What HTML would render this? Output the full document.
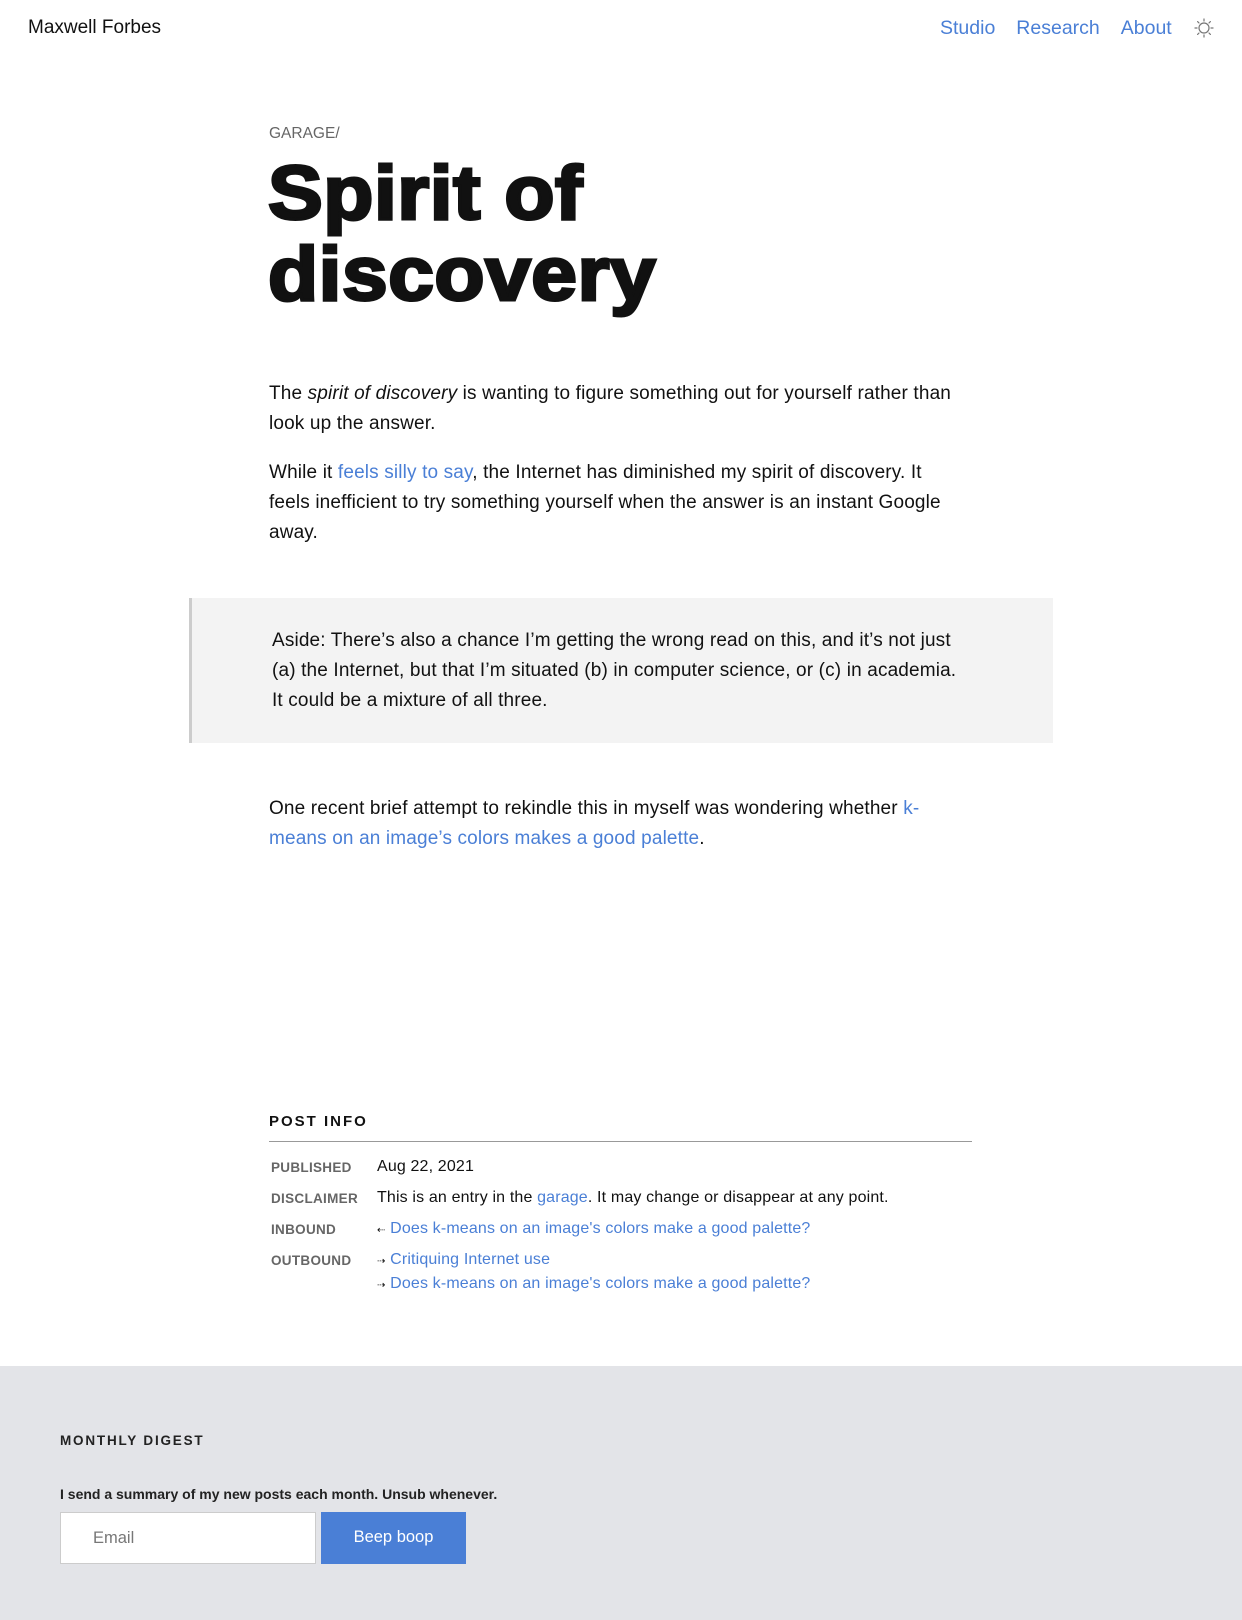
<!DOCTYPE html>
<html><head><meta charset="utf-8"><style>
*{margin:0;padding:0;box-sizing:border-box}
body{width:1242px;height:1620px;background:#fff;font-family:"Liberation Sans",sans-serif;color:#111;position:relative;overflow:hidden}
a{color:#4a7fd6;text-decoration:none}
.abs{position:absolute;white-space:nowrap}
.p{position:absolute;left:269px;width:705px;font-size:19px;line-height:30px;letter-spacing:0.15px}
.lbl{position:absolute;left:271px;font-size:13.5px;font-weight:bold;color:#666;letter-spacing:.3px}
.val{position:absolute;left:377px;font-size:16px;letter-spacing:0.15px}
</style></head><body>
<div class="abs" style="left:28px;top:17px;font-size:19px">Maxwell Forbes</div>
<div class="abs" style="left:940px;top:17px;font-size:19.5px"><a>Studio</a><a style="margin-left:21px">Research</a><a style="margin-left:21px">About</a></div>
<svg class="abs" style="left:1194px;top:18px" width="20" height="20" viewBox="0 0 20 20" fill="none" stroke="#777" stroke-width="1.2"><circle cx="10" cy="10" r="5"/><g stroke-linecap="round"><path d="M10 1v2M10 17v2M1 10h2M17 10h2M3.6 3.6l1.4 1.4M15 15l1.4 1.4M3.6 16.4L5 15M15 5l1.4-1.4"/></g></svg>
<div class="abs" style="left:269px;top:125px;font-size:15.5px;color:#666">GARAGE/</div>
<div class="abs" style="left:268px;top:153px;font-size:76px;font-weight:900;line-height:81px;letter-spacing:0.5px;color:#111;-webkit-text-stroke:3px #111;transform:scaleX(1.08);transform-origin:0 0">Spirit of<br>discovery</div>
<div class="p" style="top:379px">The <i>spirit of discovery</i> is wanting to figure something out for yourself rather than look up the answer.</div>
<div class="p" style="top:458px;width:690px">While it <a>feels silly to say</a>, the Internet has diminished my spirit of discovery. It feels inefficient to try something yourself when the answer is an instant Google away.</div>
<div class="abs" style="left:189px;top:598px;width:864px;height:145px;background:#f3f3f3;border-left:3px solid #ccc"></div>
<div class="p" style="left:272px;top:626px;width:695px">Aside: There’s also a chance I’m getting the wrong read on this, and it’s not just (a) the Internet, but that I’m situated (b) in computer science, or (c) in academia. It could be a mixture of all three.</div>
<div class="p" style="top:794px;width:680px">One recent brief attempt to rekindle this in myself was wondering whether <a>k-means on an image’s colors makes a good palette</a>.</div>
<div class="abs" style="left:269px;top:1113px;font-size:15px;font-weight:bold;letter-spacing:2px">POST INFO</div>
<div class="abs" style="left:269px;top:1141px;width:703px;border-top:1.5px solid #999"></div>
<div class="lbl" style="top:1160px">PUBLISHED</div><div class="val" style="top:1158px">Aug 22, 2021</div>
<div class="lbl" style="top:1191px">DISCLAIMER</div><div class="val" style="top:1189px">This is an entry in the <a>garage</a>. It may change or disappear at any point.</div>
<div class="lbl" style="top:1222px">INBOUND</div><div class="val" style="top:1220px"><span style="font-size:10px">⇠</span> <a>Does k-means on an image's colors make a good palette?</a></div>
<div class="lbl" style="top:1253px">OUTBOUND</div><div class="val" style="top:1251px"><span style="font-size:10px">⇢</span> <a>Critiquing Internet use</a></div>
<div class="val" style="top:1275px"><span style="font-size:10px">⇢</span> <a>Does k-means on an image's colors make a good palette?</a></div>
<div class="abs" style="left:0;top:1366px;width:1242px;height:254px;background:#e3e4e8"></div>
<div class="abs" style="left:60px;top:1433px;font-size:13.5px;font-weight:bold;letter-spacing:1.8px;color:#222">MONTHLY DIGEST</div>
<div class="abs" style="left:60px;top:1486px;font-size:14px;font-weight:bold;color:#222">I send a summary of my new posts each month. Unsub whenever.</div>
<div class="abs" style="left:60px;top:1512px;width:256px;height:52px;background:#fff;border:1px solid #ccc;font-size:16.5px;color:#777;padding:16px 0 0 32px">Email</div>
<div class="abs" style="left:321px;top:1512px;width:145px;height:52px;background:#4a7fd6;color:#fff;font-size:16.5px;text-align:center;padding-top:16px">Beep boop</div>
</body></html>
